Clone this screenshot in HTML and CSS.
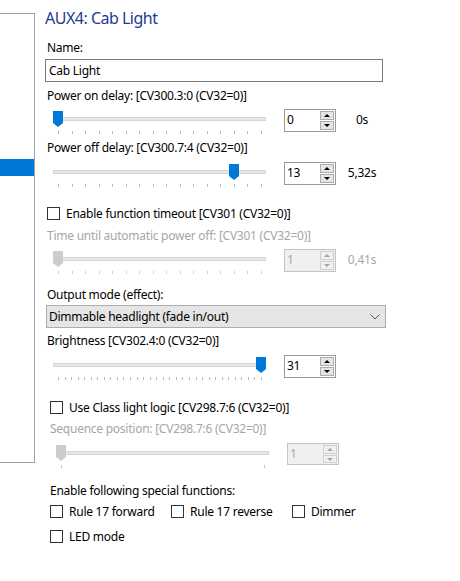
FILE: index.html
```html
<!DOCTYPE html>
<html lang="en">
<head>
    <meta charset="UTF-8">
    <meta name="viewport" content="width=device-width, initial-scale=1.0">
    <title>AUX4: Cab Light</title>
    <link rel="stylesheet" href="styles.css">
</head>
<body>

<div class="window">
    <div class="sidebar">
        <div class="sidebar-sel"></div>
    </div>

    <div class="panel">
        <h1 class="title">AUX4: Cab Light</h1>

        <div class="label name-label">Name:</div>
        <input class="text-input" type="text" value="Cab Light">

        <div class="label on-label">Power on delay: [CV300.3:0 (CV32=0)]</div>
        <div class="slider-row row-on">
            <div class="slider">
                <div class="track"></div>
                <div class="ticks ticks-16"></div>
                <svg class="thumb" style="left: 5px" width="10" height="16" viewBox="0 0 10 16"><path d="M0 0H10V12L5 16L0 12Z"/></svg>
            </div>
            <div class="spin">
                <span class="spin-value">0</span>
                <div class="spin-btns"><span class="spin-btn up"></span><span class="spin-btn down"></span></div>
            </div>
            <div class="unit">0s</div>
        </div>

        <div class="label off-label">Power off delay: [CV300.7:4 (CV32=0)]</div>
        <div class="slider-row row-off">
            <div class="slider">
                <div class="track"></div>
                <div class="ticks ticks-16"></div>
                <svg class="thumb" style="left: 181px" width="10" height="16" viewBox="0 0 10 16"><path d="M0 0H10V12L5 16L0 12Z"/></svg>
            </div>
            <div class="spin">
                <span class="spin-value">13</span>
                <div class="spin-btns"><span class="spin-btn up"></span><span class="spin-btn down"></span></div>
            </div>
            <div class="unit">5,32s</div>
        </div>

        <label class="check-row timeout-row"><input type="checkbox" class="check"> Enable function timeout [CV301 (CV32=0)]</label>

        <div class="label disabled time-label">Time until automatic power off: [CV301 (CV32=0)]</div>
        <div class="slider-row disabled row-time">
            <div class="slider">
                <div class="track"></div>
                <div class="ticks ticks-16"></div>
                <svg class="thumb" style="left: 5px" width="10" height="16" viewBox="0 0 10 16"><path d="M0 0H10V12L5 16L0 12Z"/></svg>
            </div>
            <div class="spin">
                <span class="spin-value">1</span>
                <div class="spin-btns"><span class="spin-btn up"></span><span class="spin-btn down"></span></div>
            </div>
            <div class="unit">0,41s</div>
        </div>

        <div class="label mode-label">Output mode (effect):</div>
        <div class="select">
            <span>Dimmable headlight (fade in/out)</span>
            <svg width="10" height="6" viewBox="0 0 10 6"><path d="M0.5 0.5L5 5L9.5 0.5" fill="none" stroke="#555" stroke-width="1"/></svg>
        </div>

        <div class="label bright-label">Brightness [CV302.4:0 (CV32=0)]</div>
        <div class="slider-row row-bright">
            <div class="slider">
                <div class="track"></div>
                <div class="ticks ticks-32"></div>
                <svg class="thumb" style="left: 208px" width="10" height="16" viewBox="0 0 10 16"><path d="M0 0H10V12L5 16L0 12Z"/></svg>
            </div>
            <div class="spin">
                <span class="spin-value">31</span>
                <div class="spin-btns"><span class="spin-btn up"></span><span class="spin-btn down"></span></div>
            </div>
        </div>

        <div class="group">
            <label class="check-row class-row"><input type="checkbox" class="check"> Use Class light logic [CV298.7:6 (CV32=0)]</label>

            <div class="label disabled seq-label">Sequence position: [CV298.7:6 (CV32=0)]</div>
            <div class="slider-row disabled row-seq">
                <div class="slider">
                    <div class="track"></div>
                    <div class="ticks ticks-ends"></div>
                    <svg class="thumb" style="left: 5px" width="10" height="16" viewBox="0 0 10 16"><path d="M0 0H10V12L5 16L0 12Z"/></svg>
                </div>
                <div class="spin">
                    <span class="spin-value">1</span>
                    <div class="spin-btns"><span class="spin-btn up"></span><span class="spin-btn down"></span></div>
                </div>
            </div>

            <div class="label special-label">Enable following special functions:</div>
            <div class="special-row">
                <label class="check-row"><input type="checkbox" class="check"> Rule 17 forward</label>
                <label class="check-row"><input type="checkbox" class="check"> Rule 17 reverse</label>
                <label class="check-row"><input type="checkbox" class="check"> Dimmer</label>
            </div>
            <label class="check-row led-row"><input type="checkbox" class="check"> LED mode</label>
        </div>
    </div>
</div>

</body>
</html>
```

FILE: styles.css
```css
body {
    margin: 0;
    font-family: "Noto Sans", "Open Sans", sans-serif;
    font-size: 12px;
    letter-spacing: -0.25px;
    color: #000;
    background: #fff;
}
.window {
    display: flex;
    width: 460px;
    height: 581px;
}
.sidebar {
    width: 34px;
    height: 448px;
    margin-top: 13px;
    border-top: 1px solid #a0a0a0;
    border-right: 1px solid #a0a0a0;
    border-bottom: 1px solid #a0a0a0;
    flex-shrink: 0;
}
.sidebar-sel {
    margin-top: 145px;
    height: 17px;
    background: #0078d7;
}
.panel {
    padding-left: 10px;
    width: 415px;
}
.title {
    margin: 8px 0 0 0;
    font-size: 16px;
    font-weight: normal;
    line-height: 21px;
    letter-spacing: -0.5px;
    color: #1f3a8f;
}
.label {
    line-height: 16px;
    padding-left: 2px;
    white-space: nowrap;
}
.disabled {
    color: #a6a6a6;
}
.name-label { margin-top: 11px; }
.on-label { margin-top: 6px; }
.off-label { margin-top: 8px; }
.time-label { margin-top: 7px; }
.mode-label { margin-top: 15px; }
.bright-label { margin-top: 5px; }
.seq-label { margin-top: 6px; }
.special-label { margin-top: 18px; }

.text-input {
    display: block;
    box-sizing: border-box;
    width: 338px;
    height: 23px;
    margin: 3px 0 0 0;
    padding: 0 3px;
    border: 1px solid #7a7a7a;
    font-family: inherit;
    font-size: 12px;
    letter-spacing: inherit;
    color: #000;
    outline: none;
}

/* slider + spin box */
.slider-row {
    display: flex;
    align-items: flex-start;
    height: 23px;
}
.row-on { margin-top: 5px; }
.row-off { margin-top: 6px; }
.row-time { margin-top: 5px; }
.row-bright { margin-top: 6px; }
.row-seq { margin-top: 6px; height: 22px; }
.slider {
    position: relative;
    width: 223px;
    height: 23px;
    margin-left: 3px;
}
.track {
    position: absolute;
    left: 5px;
    top: 8px;
    width: 213px;
    height: 4px;
    box-sizing: border-box;
    background: #e7e7e7;
    border: 1px solid #d6d6d6;
}
.ticks {
    position: absolute;
    left: 10px;
    top: 22px;
    width: 204px;
    height: 3px;
}
.ticks-16 {
    background: repeating-linear-gradient(to right, #b8b8b8 0 1px, transparent 1px 13.53px);
}
.ticks-32 {
    background: repeating-linear-gradient(to right, #b8b8b8 0 1px, transparent 1px 6.55px);
}
.ticks-ends {
    border-left: 1px solid #c4c4c4;
    border-right: 1px solid #c4c4c4;
    box-sizing: border-box;
}
.disabled .ticks-16 {
    background: repeating-linear-gradient(to right, #d0d0d0 0 1px, transparent 1px 13.53px);
}
.thumb {
    position: absolute;
    top: 2px;
    fill: #0078d7;
}
.disabled .thumb {
    fill: #cccccc;
}
.spin {
    display: flex;
    justify-content: space-between;
    box-sizing: border-box;
    width: 52px;
    height: 23px;
    margin-left: 13px;
    border: 1px solid #9a9a9a;
    background: #fff;
}
.row-seq .spin {
    height: 22px;
}
.disabled .spin {
    background: #f0f0f0;
    border-color: #c4c4c4;
}
.spin-value {
    padding-left: 2px;
    line-height: 20px;
}
.spin-btns {
    display: flex;
    flex-direction: column;
    gap: 1px;
    padding: 1px 1px 1px 0;
}
.spin-btn {
    position: relative;
    box-sizing: border-box;
    width: 14px;
    height: 9px;
    border: 1px solid #adadad;
    background: #e5e5e5;
}
.disabled .spin-btn {
    border-color: #cfcfcf;
    background: #f0f0f0;
}
.spin-btn::after {
    content: "";
    position: absolute;
    left: 3px;
    top: 2px;
    border-left: 3px solid transparent;
    border-right: 3px solid transparent;
}
.spin-btn.up::after {
    border-bottom: 3px solid #000;
}
.spin-btn.down::after {
    border-top: 3px solid #000;
}
.disabled .spin-btn.up::after {
    border-bottom-color: #a6a6a6;
}
.disabled .spin-btn.down::after {
    border-top-color: #a6a6a6;
}
.unit {
    width: 52px;
    text-align: center;
    line-height: 22px;
}

/* checkboxes */
.check-row {
    display: flex;
    align-items: center;
    gap: 6px;
    height: 16px;
    padding-left: 2px;
    white-space: nowrap;
}
.check {
    appearance: none;
    -webkit-appearance: none;
    box-sizing: border-box;
    width: 13px;
    height: 13px;
    margin: 0;
    border: 1px solid #333;
    background: #fff;
}
.timeout-row { margin-top: 20px; }
.class-row { margin-top: 21px; }
.led-row { margin-top: 9px; }

.group {
    padding-left: 3px;
}
.special-row {
    display: flex;
    margin-top: 4px;
}
.special-row .check-row {
    width: 119px;
}

/* combo box */
.select {
    display: flex;
    align-items: center;
    justify-content: space-between;
    box-sizing: border-box;
    width: 340px;
    height: 23px;
    margin: 2px 0 0 1px;
    padding: 0 5px 0 2px;
    background: #e5e5e5;
    border: 1px solid #adadad;
}
```
